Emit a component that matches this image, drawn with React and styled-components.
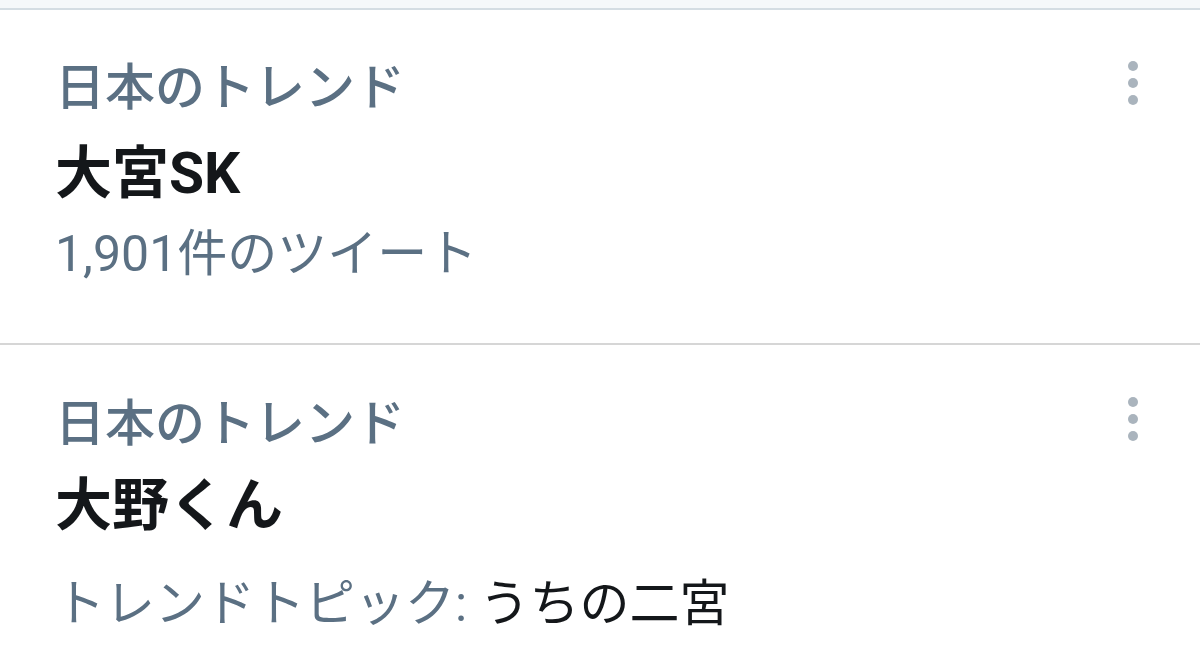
import styled, { createGlobalStyle } from 'styled-components';

const GlobalStyle = createGlobalStyle`
  html, body {
    margin: 0;
    padding: 0;
    background: #ffffff;
  }
  body {
    font-family: Roboto, "Noto Sans CJK JP", "Noto Sans", sans-serif;
  }
`;

const Page = styled.div`
  width: 1200px;
  height: 668px;
  overflow: hidden;
  background: #ffffff;
`;

const TopBand = styled.div`
  height: 8px;
  background: #f5f8fa;
  border-bottom: 2px solid #d4dde3;
`;

const Item = styled.div`
  display: flex;
  justify-content: space-between;
  align-items: flex-start;
  padding: ${(p) => p.$top}px 35px ${(p) => p.$bottom}px 55px;
  border-bottom: ${(p) => (p.$divider ? '2px solid #d6d6d6' : 'none')};
`;

const Body = styled.div`
  display: flex;
  flex-direction: column;
`;

const Label = styled.div`
  font-size: 50px;
  line-height: 50px;
  font-weight: 500;
  color: #5b7083;
  font-family: "Noto Sans CJK JP", sans-serif;
`;

const Title = styled.div`
  margin-top: ${(p) => p.$gap}px;
  font-size: 57px;
  line-height: 56px;
  font-weight: 700;
  color: #14171a;
  font-family: Roboto, "Noto Sans CJK JP", sans-serif;
`;

const Meta = styled.div`
  margin-top: ${(p) => p.$gap}px;
  font-size: 50px;
  line-height: 56px;
  color: #5b7083;
  font-family: Roboto, "Noto Sans CJK JP", sans-serif;
`;

const Topic = styled.span`
  color: #14171a;
`;

const MoreButton = styled.button`
  display: flex;
  align-items: center;
  justify-content: center;
  width: 40px;
  height: 50px;
  margin-right: 12px;
  padding: 0;
  border: none;
  background: transparent;
`;

function Dots() {
  return (
    <svg width="12" height="46" viewBox="0 0 12 46">
      <circle cx="6" cy="6" r="5" fill="#aab4bd" />
      <circle cx="6" cy="23" r="5" fill="#aab4bd" />
      <circle cx="6" cy="40" r="5" fill="#aab4bd" />
    </svg>
  );
}

function Trend({ title, meta, top, bottom, titleGap, metaGap, divider }) {
  return (
    <Item $top={top} $bottom={bottom} $divider={divider}>
      <Body>
        <Label>日本のトレンド</Label>
        <Title $gap={titleGap}>{title}</Title>
        <Meta $gap={metaGap}>{meta}</Meta>
      </Body>
      <MoreButton>
        <Dots />
      </MoreButton>
    </Item>
  );
}

export default function App() {
  return (
    <Page>
      <GlobalStyle />
      <TopBand />
      <Trend
        title="大宮SK"
        meta="1,901件のツイート"
        top={48}
        bottom={61}
        titleGap={38}
        metaGap={24}
        divider
      />
      <Trend
        title="大野くん"
        meta={
          <>
            トレンドトピック: <Topic>うちの二宮</Topic>
          </>
        }
        top={49}
        bottom={40}
        titleGap={34}
        metaGap={42}
      />
    </Page>
  );
}
